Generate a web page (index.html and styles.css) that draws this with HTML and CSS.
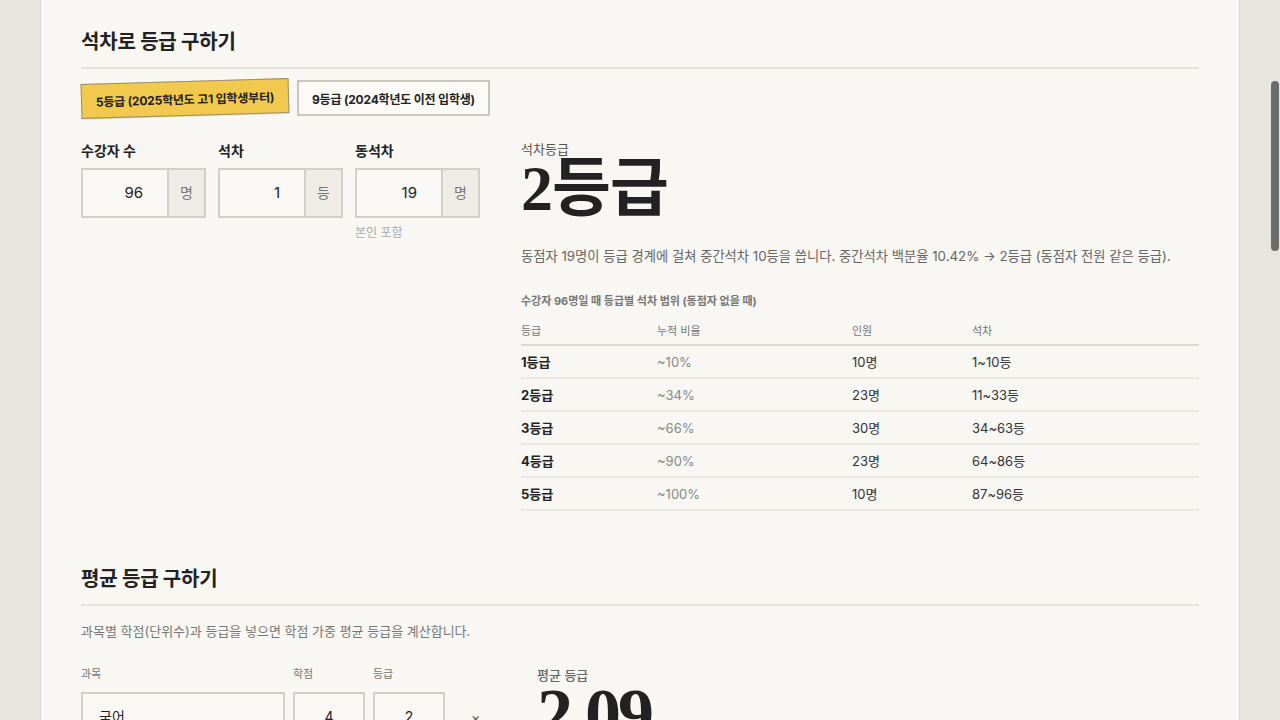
FILE: index.html
```html
<!DOCTYPE html>
<html lang="ko">
<head>
<meta charset="utf-8">
<link rel="stylesheet" href="styles.css">
</head>
<body>
<div class="page">
  <main class="card">
    <section class="sec">
      <h2 class="sec-title">석차로 등급 구하기</h2>
      <div class="tabs">
        <button class="tab tab-on">5등급 (2025학년도 고1 입학생부터)</button>
        <button class="tab">9등급 (2024학년도 이전 입학생)</button>
      </div>
      <div class="cols">
        <div class="inputs">
          <div class="field">
            <div class="label">수강자 수</div>
            <div class="box"><span class="val">96</span><span class="unit">명</span></div>
          </div>
          <div class="field">
            <div class="label">석차</div>
            <div class="box"><span class="val">1</span><span class="unit">등</span></div>
          </div>
          <div class="field">
            <div class="label">동석차</div>
            <div class="box"><span class="val">19</span><span class="unit">명</span></div>
            <div class="hint">본인 포함</div>
          </div>
        </div>
        <div class="result">
          <div class="res-label">석차등급</div>
          <div class="big">2등급</div>
          <p class="desc">동점자 19명이 등급 경계에 걸쳐 중간석차 10등을 씁니다. 중간석차 백분율 10.42% → 2등급 (동점자 전원 같은 등급).</p>
          <div class="cap">수강자 96명일 때 등급별 석차 범위 (동점자 없을 때)</div>
          <table class="tbl">
            <thead>
              <tr><th class="c1">등급</th><th class="c2">누적 비율</th><th class="c3">인원</th><th>석차</th></tr>
            </thead>
            <tbody>
              <tr><td class="g">1등급</td><td class="p">~10%</td><td>10명</td><td>1~10등</td></tr>
              <tr><td class="g">2등급</td><td class="p">~34%</td><td>23명</td><td>11~33등</td></tr>
              <tr><td class="g">3등급</td><td class="p">~66%</td><td>30명</td><td>34~63등</td></tr>
              <tr><td class="g">4등급</td><td class="p">~90%</td><td>23명</td><td>64~86등</td></tr>
              <tr><td class="g">5등급</td><td class="p">~100%</td><td>10명</td><td>87~96등</td></tr>
            </tbody>
          </table>
        </div>
      </div>
    </section>

    <section class="sec sec2">
      <h2 class="sec-title">평균 등급 구하기</h2>
      <p class="intro">과목별 학점(단위수)과 등급을 넣으면 학점 가중 평균 등급을 계산합니다.</p>
      <div class="cols2">
        <div class="rows">
          <div class="row-head">
            <span class="h-sub">과목</span><span class="h-cr">학점</span><span class="h-gr">등급</span>
          </div>
          <div class="row">
            <div class="in in-sub">국어</div>
            <div class="in in-cr">4</div>
            <div class="in in-gr">2</div>
            <span class="del">×</span>
          </div>
        </div>
        <div class="avg">
          <div class="res-label">평균 등급</div>
          <div class="big big2">2.09</div>
        </div>
      </div>
    </section>
  </main>
</div>
<div class="scrollbar"><div class="thumb"></div></div>
</body>
</html>
```

FILE: styles.css
```css
* { box-sizing: border-box; }
html, body { margin: 0; padding: 0; height: 100%; overflow: hidden; }
body {
  background: #e8e5df;
  font-family: Inter, "Noto Sans CJK KR", sans-serif;
  color: #222;
}
.page { width: 1280px; }
.card {
  width: 1200px;
  margin: 0 auto;
  background: #f8f7f3;
  border-left: 1px solid #d9d6d0;
  border-right: 1px solid #d9d6d0;
  padding: 28px 40px 40px;
  min-height: 800px;
}
.sec-title {
  margin: 0;
  font-size: 20px;
  font-weight: 700;
  line-height: 28px;
  color: #222;
  padding-bottom: 11px;
  border-bottom: 2px solid #e6e3dd;
  letter-spacing: -0.2px;
}
.tabs { display: flex; gap: 8px; margin-top: 11px; align-items: center; }
.tab {
  font-family: Inter, "Noto Sans CJK KR", sans-serif;
  font-size: 12px;
  font-weight: 700;
  color: #222;
  background: #fbfaf7;
  border: 2px solid #c9c6c0;
  height: 36px;
  padding: 0 13px;
  margin: 0;
  white-space: nowrap;
  letter-spacing: -0.2px;
}
.tab-on {
  background: #f2c94f;
  border: 1px solid #9c9170;
  height: 35px;
  width: 208px;
  padding: 0 6px;
  transform: rotate(-1.6deg);
  box-shadow: 0 1px 0 rgba(0,0,0,0.08);
}
.cols { display: flex; gap: 40px; margin-top: 25px; }
.inputs { display: flex; gap: 12px; width: 400px; flex: none; }
.field { width: 125px; }
.label { font-size: 14px; font-weight: 700; line-height: 20px; color: #222; margin-bottom: 7px; }
.box {
  display: flex;
  height: 50px;
  border: 2px solid #d2cfc9;
  background: #f9f8f5;
}
.val { flex: 1; text-align: right; padding-right: 24px; font-size: 15px; line-height: 46px; color: #222; }
.unit {
  width: 37px;
  flex: none;
  border-left: 2px solid #d2cfc9;
  background: #efebe6;
  text-align: center;
  font-size: 14px;
  line-height: 46px;
  color: #777;
}
.hint { font-size: 12px; color: #aaa; margin-top: 7px; line-height: 16px; }
.result { flex: 1; }
.res-label { font-size: 13px; line-height: 16px; color: #555; }
.big {
  font-family: "Liberation Serif", "Noto Sans CJK KR", serif;
  font-size: 64px;
  font-weight: 700;
  line-height: 64px;
  color: #222;
  letter-spacing: -1px;
}
.desc { margin: 26px 0 0; font-size: 13.3px; line-height: 18px; color: #666; }
.cap { margin-top: 28px; font-size: 11px; font-weight: 700; color: #777; line-height: 16px; }
.tbl { width: 100%; border-collapse: collapse; margin-top: 13px; }
.tbl th {
  text-align: left;
  font-size: 11px;
  font-weight: 400;
  color: #777;
  padding: 0 0 6px;
  height: 23px;
  border-bottom: 2px solid #dcd8d2;
}
.tbl .c1 { width: 136px; }
.tbl .c2 { width: 195px; }
.tbl .c3 { width: 120px; }
.tbl td {
  font-size: 13px;
  color: #333;
  height: 33px;
  padding: 0;
  border-bottom: 2px solid #ebe8e2;
}
.tbl td.g { font-weight: 700; color: #222; }
.tbl td.p { color: #888; }
.sec2 { margin-top: 54px; }
.intro { margin: 16px 0 0; font-size: 13px; color: #777; line-height: 18px; }
.cols2 { display: flex; gap: 40px; margin-top: 26px; }
.rows { width: 416px; flex: none; }
.row-head { display: flex; font-size: 11px; color: #777; line-height: 16px; }
.h-sub { width: 212px; }
.h-cr { width: 80px; }
.row { display: flex; gap: 8px; margin-top: 10px; align-items: center; }
.in {
  height: 50px;
  border: 2px solid #d2cfc9;
  background: #f9f8f5;
  font-size: 14px;
  color: #222;
  line-height: 46px;
}
.in-sub { width: 204px; padding-left: 16px; }
.in-cr, .in-gr { width: 72px; text-align: center; }
.del { margin-left: 18px; font-size: 14px; color: #555; }
.avg { padding-top: 1px; }
.avg .res-label { font-weight: 500; color: #666; }
.big2 { font-size: 72px; line-height: 62px; letter-spacing: -3px; }
.scrollbar { position: fixed; top: 0; right: 0; width: 14px; height: 720px; }
.thumb {
  position: absolute;
  top: 81px;
  left: 5px;
  width: 8px;
  height: 170px;
  border-radius: 4px;
  background: #6c6c6a;
}
```
